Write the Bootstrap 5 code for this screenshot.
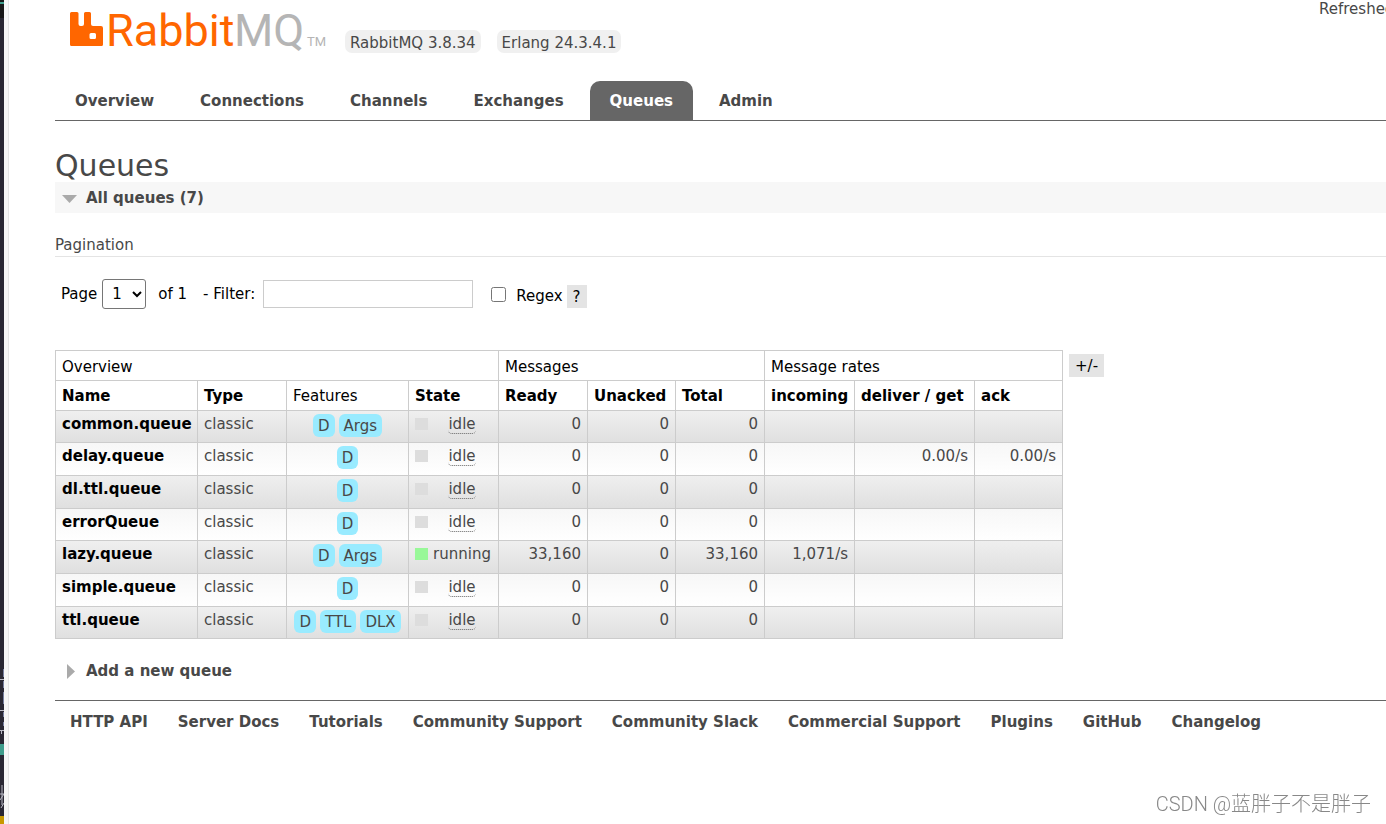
<!DOCTYPE html>
<html lang="en">
<head>
<meta charset="utf-8">
<meta name="viewport" content="width=device-width, initial-scale=1">
<title>RabbitMQ Management</title>
<link href="https://cdn.jsdelivr.net/npm/bootstrap@5.3.0/dist/css/bootstrap.min.css" rel="stylesheet">
<style>
body{font:15px/20px Verdana,"DejaVu Sans",sans-serif;color:#484848;background:#fff;overflow-x:hidden}
a{color:#484848;text-decoration:none}
.edge{flex:0 0 9px;border-right:1px solid #e4e4e4;background:linear-gradient(90deg,#292733 4px,#f6f6f6 4px)}
.edge svg{display:block;width:4px;height:184px}
.edge svg.top-bit{height:18px}
.page{padding-left:46px;min-width:0}
.masthead{height:81px}
.logo{width:258px;height:42px;margin:9px 0 0 14px;overflow:visible}
.logo text{font-family:Roboto,"Liberation Sans",sans-serif;font-weight:400}
.version{background:#f0f0f0;border-radius:7px;padding:3px 5px 0;height:23px}
.versions{gap:16px;margin:30px 0 0 18px}
.refreshed{width:67px;white-space:nowrap;overflow:hidden;line-height:18px}
.tabs{border-bottom:1px solid #666;gap:6px}
.tabs .nav-link{color:#484848;font-weight:700;padding:10px 20px 9px;border-radius:10px 10px 0 0}
.tabs .nav-link.active{background:#666;color:#fff}
h1{font-size:30px;line-height:33px;margin:28px 0 0;font-weight:400}
h2{font-size:15px;line-height:29px;margin:0;font-weight:700}
h2 button{border:0;background:none;padding:2px 0 0 7px;font-weight:700;color:#484848;display:flex;align-items:center;gap:9px}
h2 svg{width:15px;height:15px}
h2.open{background:#f7f7f7}
h3{font-size:15px;line-height:20px;font-weight:400;margin:22px 0 0;padding-bottom:1px;border-bottom:1px solid #e4e4e4}
.pager{color:#000;padding-left:6px;margin-top:22px;height:30px}
.pager select{width:44px;height:30px;border:1px solid #767676;border-radius:3px;color:#000;background:#fff;margin:0 12px 0 5px;padding:0 0 0 5px}
.pager input[type=text]{width:210px;height:28px;border:1px solid #ccc;margin:0 18px 0 8px}
.pager input[type=checkbox]{width:15px;height:15px;margin:0 10px 0 0}
.help-btn{border:0;background:#e4e4e4;color:#000;height:23px;line-height:23px;padding:1px 6px 0}
.listing{margin-top:41px;gap:6px}
.queues{width:1008px;flex:none;table-layout:fixed;border-collapse:collapse}
.queues th,.queues td{border:1px solid #ccc;padding:3px 6px 2px;white-space:nowrap;vertical-align:top}
.queues thead th{height:30px;padding:5px 0 4px 6px;color:#000}
.queues thead tr:first-child th{padding:6px 6px 3px}
.queues thead .plain{font-weight:400}
.queues tbody tr{height:33px;background:linear-gradient(#f7f7f7,#fff)}
.queues tbody tr:nth-child(3n+1){height:32px}
.queues tbody tr:nth-child(odd){background:linear-gradient(#efefef,#dfdfdf)}
.queues tbody a{color:#000;font-weight:700}
.queues td.num{text-align:right}
.queues td.tags{padding:3px 0 2px}
.feature{background:#99ebff;border-radius:6px;padding:1px 5px;height:23px;line-height:22px}
.state-box{width:13px;height:12px;background:#ddd;flex:none}
.state-box.running{background:#98f898}
.queues abbr{text-decoration:none;border-bottom:1px dotted #666;border-radius:4px;line-height:17px;cursor:help}
.add-queue{margin-top:16px}
.links{border-top:1px solid #666;margin-top:14px;padding:11px 15px;gap:30px;font-weight:700;white-space:nowrap}
.watermark{position:fixed;right:15px;bottom:8px;font:20px/24px Roboto,"Noto Sans CJK SC",sans-serif;font-weight:300;color:#888}
</style>
</head>
<body>
<div class="d-flex min-vh-100">
<div class="edge d-flex flex-column justify-content-between" aria-hidden="true">
<svg class="top-bit" viewBox="0 0 4 18"><path fill="#171717" d="M0 0h4v18H0z"/><path fill="#3f9d8c" d="M0 2h4v2H0z"/></svg>
<svg viewBox="0 0 4 184"><path fill="#777f9f" d="M3 29h1v8h-1zM3 41h1v7h-1zM3 52h1v12h-1zM3 72h1v5h-1zM3 82h1v4h-1z"/><path fill="none" stroke="#b9b9c4" d="M0 39.500h4M0 70.500h4M0 90.500h4M1.500 90v4M2 145v20M0 154h4M0 160l4-6M1 168l3-5"/><path fill="#3f9d8c" d="M1 101h3v3h-4v11h4v-14z"/><path fill="#c79800" d="M0 176h4v8H0z"/></svg>
</div>
<main class="page flex-grow-1">
<header class="masthead d-flex align-items-start">
<a href="#" aria-label="RabbitMQ"><svg class="logo d-block" viewBox="0 0 258 42"><path fill="#f60" d="M2.500 3H8q1.500 0 1.500 1.500V15q0 2 2 2H13q2 0 2-2V4.500Q15 3 16.500 3H20.500q1.500 0 1.500 1.500V15q0 2 2 2H32q2 0 2 2V35.500q0 1.500-1.500 1.500H2.500Q1 37 1 35.500V4.500Q1 3 2.500 3zM22 24q-1.500 0-1.500 1.500v3q0 1.500 1.500 1.500h3.500q1.500 0 1.500-1.500v-3Q27 24 25.500 24z"/><text x="37" y="37" font-size="45" fill="#f60">Rabbit</text><text x="165" y="37" font-size="45" fill="#b5b5b5">MQ</text><text x="238" y="37" font-size="13" fill="#b5b5b5">TM</text></svg></a>
<div class="versions d-flex"><span class="version">RabbitMQ 3.8.34</span><span class="version">Erlang 24.3.4.1</span></div>
<div class="refreshed ms-auto">Refreshed</div>
</header>
<nav class="tabs nav">
<a class="nav-link" href="#">Overview</a><a class="nav-link" href="#">Connections</a><a class="nav-link" href="#">Channels</a><a class="nav-link" href="#">Exchanges</a><a class="nav-link active" aria-current="page" href="#">Queues</a><a class="nav-link" href="#">Admin</a>
</nav>
<h1>Queues</h1>
<h2 class="open"><button type="button" aria-expanded="true"><svg viewBox="0 0 15 15"><path fill="#aaa" d="M0 4h15L7.500 12z"/></svg>All queues (7)</button></h2>
<h3>Pagination</h3>
<form class="pager d-flex align-items-center">
<label for="page">Page</label><select id="page"><option>1</option></select><span>of 1</span>
<label for="filter" class="ms-3">- Filter:</label><input type="text" id="filter">
<input type="checkbox" id="regex"><label for="regex" class="pt-1 me-1">Regex</label><button type="button" class="help-btn mt-1">?</button>
</form>
<div class="listing d-flex align-items-start">
<table class="queues">
<colgroup><col style="width:142px"><col style="width:89px"><col style="width:122px"><col style="width:90px"><col style="width:89px"><col style="width:88px"><col style="width:89px"><col style="width:90px"><col style="width:120px"><col style="width:88px"></colgroup>
<thead>
<tr><th class="plain" colspan="4">Overview</th><th class="plain" colspan="3">Messages</th><th class="plain" colspan="3">Message rates</th></tr>
<tr><th>Name</th><th>Type</th><th class="plain">Features</th><th>State</th><th>Ready</th><th>Unacked</th><th>Total</th><th>incoming</th><th>deliver / get</th><th>ack</th></tr>
</thead>
<tbody>
<tr><td><a href="#">common.queue</a></td><td>classic</td><td class="tags"><div class="d-flex justify-content-center gap-1"><span class="feature">D</span><span class="feature">Args</span></div></td><td><div class="d-flex align-items-center"><span class="state-box"></span><span class="flex-grow-1 text-center ps-1"><abbr>idle</abbr></span></div></td><td class="num">0</td><td class="num">0</td><td class="num">0</td><td></td><td></td><td></td></tr>
<tr><td><a href="#">delay.queue</a></td><td>classic</td><td class="tags"><div class="d-flex justify-content-center gap-1"><span class="feature">D</span></div></td><td><div class="d-flex align-items-center"><span class="state-box"></span><span class="flex-grow-1 text-center ps-1"><abbr>idle</abbr></span></div></td><td class="num">0</td><td class="num">0</td><td class="num">0</td><td></td><td class="num">0.00/s</td><td class="num">0.00/s</td></tr>
<tr><td><a href="#">dl.ttl.queue</a></td><td>classic</td><td class="tags"><div class="d-flex justify-content-center gap-1"><span class="feature">D</span></div></td><td><div class="d-flex align-items-center"><span class="state-box"></span><span class="flex-grow-1 text-center ps-1"><abbr>idle</abbr></span></div></td><td class="num">0</td><td class="num">0</td><td class="num">0</td><td></td><td></td><td></td></tr>
<tr><td><a href="#">errorQueue</a></td><td>classic</td><td class="tags"><div class="d-flex justify-content-center gap-1"><span class="feature">D</span></div></td><td><div class="d-flex align-items-center"><span class="state-box"></span><span class="flex-grow-1 text-center ps-1"><abbr>idle</abbr></span></div></td><td class="num">0</td><td class="num">0</td><td class="num">0</td><td></td><td></td><td></td></tr>
<tr><td><a href="#">lazy.queue</a></td><td>classic</td><td class="tags"><div class="d-flex justify-content-center gap-1"><span class="feature">D</span><span class="feature">Args</span></div></td><td><div class="d-flex align-items-center"><span class="state-box running"></span><span class="flex-grow-1 text-center ps-1">running</span></div></td><td class="num">33,160</td><td class="num">0</td><td class="num">33,160</td><td class="num">1,071/s</td><td></td><td></td></tr>
<tr><td><a href="#">simple.queue</a></td><td>classic</td><td class="tags"><div class="d-flex justify-content-center gap-1"><span class="feature">D</span></div></td><td><div class="d-flex align-items-center"><span class="state-box"></span><span class="flex-grow-1 text-center ps-1"><abbr>idle</abbr></span></div></td><td class="num">0</td><td class="num">0</td><td class="num">0</td><td></td><td></td><td></td></tr>
<tr><td><a href="#">ttl.queue</a></td><td>classic</td><td class="tags"><div class="d-flex justify-content-center gap-1"><span class="feature">D</span><span class="feature">TTL</span><span class="feature">DLX</span></div></td><td><div class="d-flex align-items-center"><span class="state-box"></span><span class="flex-grow-1 text-center ps-1"><abbr>idle</abbr></span></div></td><td class="num">0</td><td class="num">0</td><td class="num">0</td><td></td><td></td><td></td></tr>
</tbody>
</table>
<button type="button" class="help-btn mt-1">+/-</button>
</div>
<h2 class="add-queue"><button type="button" aria-expanded="false"><svg viewBox="0 0 15 15"><path fill="#aaa" d="M5 0v15l8-7.500z"/></svg>Add a new queue</button></h2>
<footer class="links d-flex"><a href="#">HTTP API</a><a href="#">Server Docs</a><a href="#">Tutorials</a><a href="#">Community Support</a><a href="#">Community Slack</a><a href="#">Commercial Support</a><a href="#">Plugins</a><a href="#">GitHub</a><a href="#">Changelog</a></footer>
</main>
</div>
<div class="watermark">CSDN @蓝胖子不是胖子</div>
<script src="https://cdn.jsdelivr.net/npm/bootstrap@5.3.0/dist/js/bootstrap.bundle.min.js"></script>
</body>
</html>
